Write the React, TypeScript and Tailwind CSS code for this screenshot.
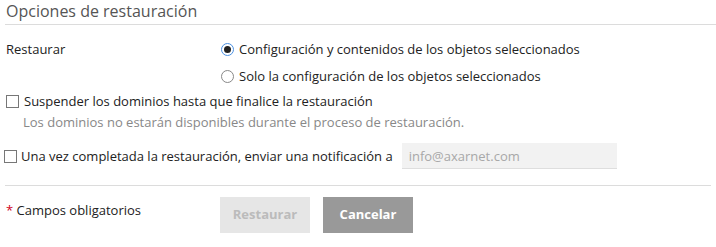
export default function App() {
  return (
    <div className="w-[716px] h-[247px] bg-white text-[13px] text-[#222] font-['Open_Sans',sans-serif] overflow-hidden">
      <div className="pl-[5px]">
        <h2 className="pl-px pt-[1px] pb-[3px] text-[16px] leading-[20px] text-[#555] border-b border-[#dcdcdc]">
          Opciones de restauración
        </h2>
      </div>

      <div className="flex pl-[6px] pt-[15px]">
        <div className="w-[215px] leading-[18px]">Restaurar</div>
        <div className="flex flex-col gap-[9px]">
          <label className="flex items-center gap-[5px] leading-[18px]">
            <span className="flex h-[13px] w-[13px] items-center justify-center rounded-full border border-[#4a90e2] bg-white">
              <span className="h-[7px] w-[7px] rounded-full bg-[#222]" />
            </span>
            Configuración y contenidos de los objetos seleccionados
          </label>
          <label className="flex items-center gap-[5px] leading-[18px]">
            <span className="h-[13px] w-[13px] rounded-full border border-[#888] bg-white" />
            Solo la configuración de los objetos seleccionados
          </label>
        </div>
      </div>

      <div className="pl-[6px] pt-[7px]">
        <label className="flex items-center gap-[5px] leading-[18px]">
          <span className="h-[13px] w-[13px] border border-[#777] bg-white" />
          Suspender los dominios hasta que finalice la restauración
        </label>
        <p className="pl-[17px] pt-[3px] leading-[18px] text-[#888]">
          Los dominios no estarán disponibles durante el proceso de restauración.
        </p>
      </div>

      <div className="flex items-center pl-[4px] pt-[12px]">
        <span className="h-[13px] w-[13px] border border-[#777] bg-white" />
        <span className="ml-[4px] leading-[18px]">
          Una vez completada la restauración, enviar una notificación a
        </span>
        <input
          disabled
          placeholder="info@axarnet.com"
          className="ml-[9px] h-[26px] w-[215px] bg-[#f2f2f2] border-b border-[#dedede] px-[7px] text-[13px] placeholder:text-[#a8a8a8] outline-none"
        />
      </div>

      <div className="mx-[5px] mt-[16px] border-t border-[#dcdcdc]" />

      <div className="flex pl-[6px] pt-[11px]">
        <div className="w-[214px] pt-[4px] leading-[18px]">
          <span className="text-[#d0021b]">*</span> Campos obligatorios
        </div>
        <button className="h-[36px] w-[90px] bg-[#e6e6e6] font-bold text-[#bbb]">Restaurar</button>
        <button className="ml-[13px] h-[36px] w-[90px] bg-[#999] font-bold text-white">Cancelar</button>
      </div>
    </div>
  );
}
